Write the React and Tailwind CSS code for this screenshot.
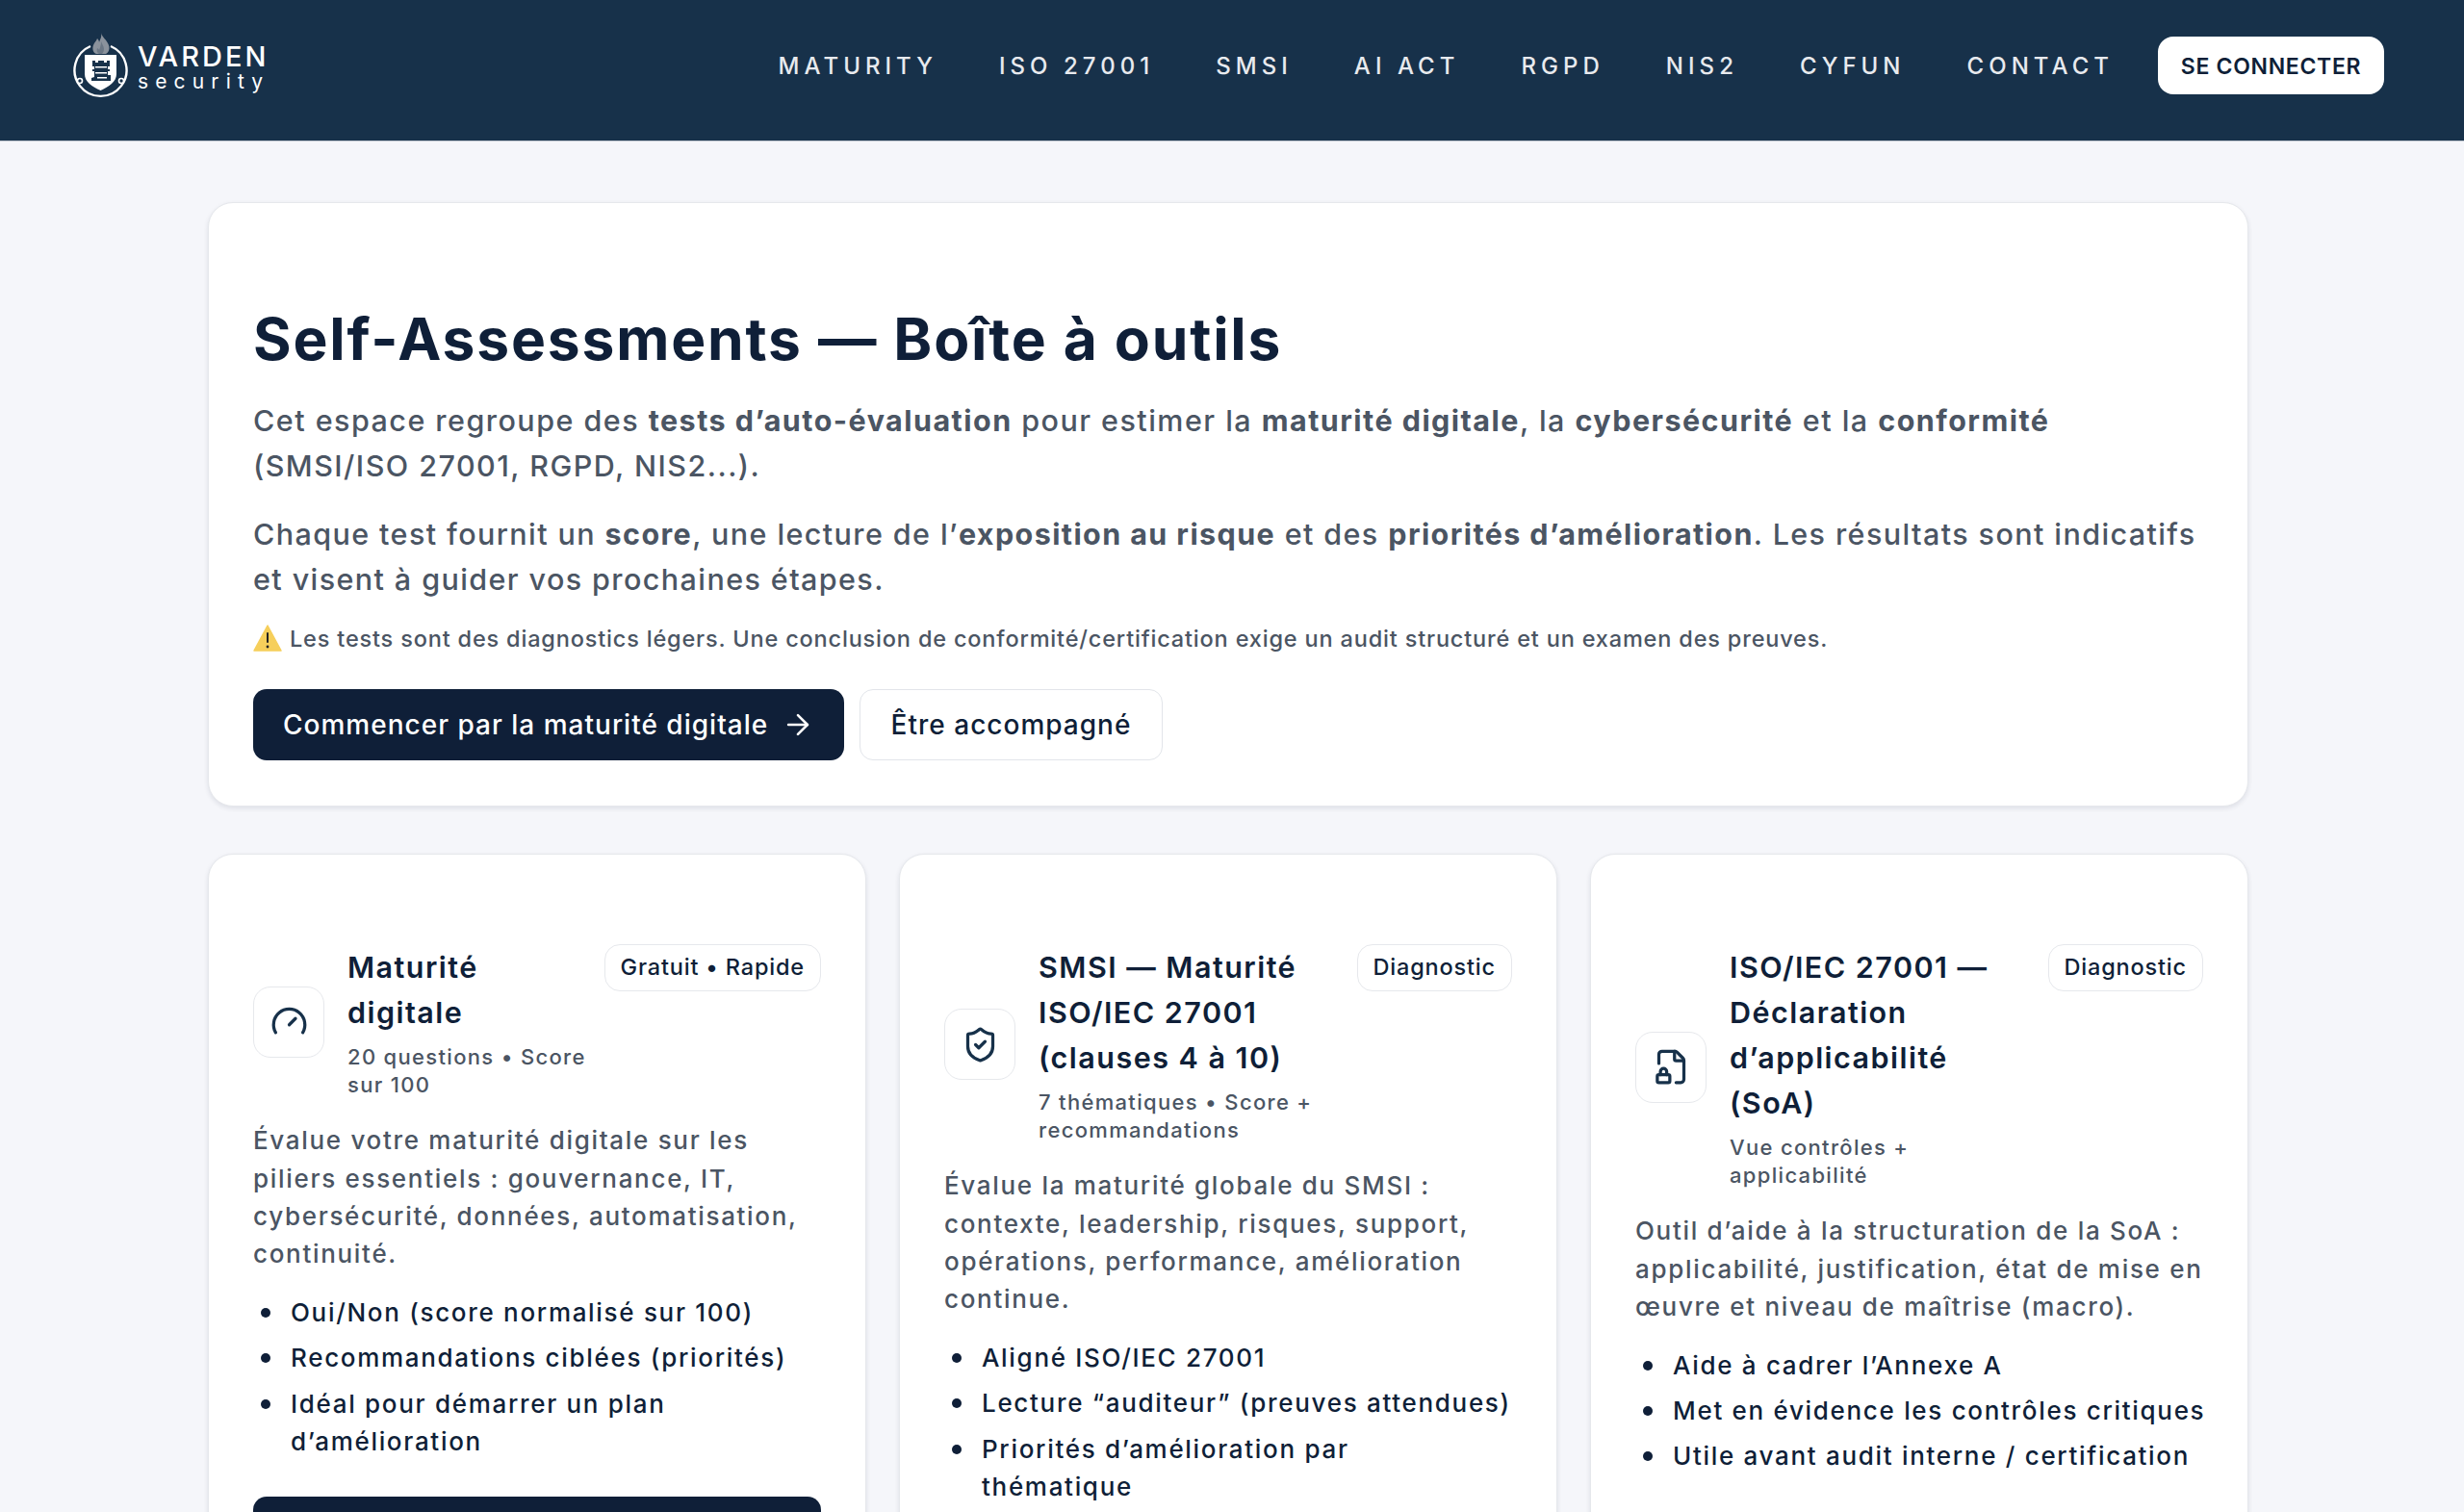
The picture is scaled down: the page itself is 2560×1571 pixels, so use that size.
import { ArrowRight, Gauge, ShieldCheck, FileLock } from 'lucide-react'

const NAV = ['Maturity', 'ISO 27001', 'SMSI', 'AI Act', 'RGPD', 'NIS2', 'CyFun', 'Contact']

const CARDS = [
  {
    icon: Gauge,
    title: 'Maturité\ndigitale',
    badge: 'Gratuit • Rapide',
    meta: '20 questions • Score\nsur 100',
    desc: 'Évalue votre maturité digitale sur les\npiliers essentiels : gouvernance, IT,\ncybersécurité, données, automatisation,\ncontinuité.',
    items: ['Oui/Non (score normalisé sur 100)', 'Recommandations ciblées (priorités)', 'Idéal pour démarrer un plan\nd’amélioration']
  },
  {
    icon: ShieldCheck,
    title: 'SMSI — Maturité\nISO/IEC 27001\n(clauses 4 à 10)',
    badge: 'Diagnostic',
    meta: '7 thématiques • Score +\nrecommandations',
    desc: 'Évalue la maturité globale du SMSI :\ncontexte, leadership, risques, support,\nopérations, performance, amélioration\ncontinue.',
    items: ['Aligné ISO/IEC 27001', 'Lecture “auditeur” (preuves attendues)', 'Priorités d’amélioration par\nthématique']
  },
  {
    icon: FileLock,
    title: 'ISO/IEC 27001 —\nDéclaration\nd’applicabilité\n(SoA)',
    badge: 'Diagnostic',
    meta: 'Vue contrôles +\napplicabilité',
    desc: 'Outil d’aide à la structuration de la SoA :\napplicabilité, justification, état de mise en\nœuvre et niveau de maîtrise (macro).',
    items: ['Aide à cadrer l’Annexe A', 'Met en évidence les contrôles critiques', 'Utile avant audit interne / certification']
  }
]

const Logo = () => (
  <svg width="60" height="68" viewBox="0 0 60 68" fill="none">
    <path d="M19 14a27 27 0 1 0 21 0" stroke="#fff" strokeWidth="2.4" />
    <path d="M30 0c1 5 6 7 8 13 1.500 4-.5 8-3 9H25c-3-1-4.500-5-3-9 1-3 3-4 4-7 1 1 2 2 2 4 1-3 3-6 2-10z" fill="#8a929c" />
    <path d="M30 9c1 3 3 5 3 8 0 2-1 4-2 5h-3c-2-1-3-4-2-6 1 1 2 1 2 2 1-3 2-5 2-9z" fill="#6b7785" />
    <path d="M13 23h33v20c0 8-8 13-16.500 17-9-4-16.500-9-16.500-17z" fill="#fff" />
    <path d="M21 29h3v2h3v-2h6v2h3v-2h3v6h-2v3h2v2h-2v4h3v6H20v-3l3-1v-6h-2v-2h2v-3h-2z" fill="#17314a" />
    <path d="M24 35h12v1.500H24zM24 41h12v1.500H24zM26 46h10v1.500H26z" fill="#fff" />
    <circle cx="8" cy="50" r="2.500" fill="#17314a" stroke="#fff" strokeWidth="1.600" />
    <circle cx="51" cy="50" r="2.500" fill="#17314a" stroke="#fff" strokeWidth="1.600" />
  </svg>
)

const WarningIcon = () => (
  <svg width="30" height="30" viewBox="0 0 30 30" className="shrink-0">
    <path d="M15 2 29 28H1z" fill="#f6cf5b" stroke="#f6cf5b" strokeWidth="1.500" strokeLinejoin="round" />
    <rect x="14" y="9" width="2" height="11" rx="1" fill="#222" />
    <circle cx="15" cy="24" r="1.400" fill="#222" />
  </svg>
)

const Header = () => (
  <header className="h-[147px] bg-[#17314a] border-b border-[#c3c9d1] flex items-center justify-between pl-[75px] pr-[83px] pb-[10px]">
    <div className="flex items-center gap-[8px]">
      <Logo />
      <div className="text-white leading-none pt-[2px]">
        <div className="text-[29px] font-medium tracking-[0.105em]">VARDEN</div>
        <div className="text-[21px] tracking-[0.34em] mt-[1px]">security</div>
      </div>
    </div>
    <div className="flex items-center">
      <nav className="flex items-center gap-[64px] mr-[46px] mt-[2px]">
        {NAV.map((item) => (
          <a key={item} className="text-[24px] font-medium uppercase tracking-[0.21em] text-[#e8eaee]">{item}</a>
        ))}
      </nav>
      <button className="h-[60px] w-[235px] pt-[2px] rounded-[16px] bg-white text-[23px] font-semibold uppercase tracking-[0.03em] text-[#0f1f38]">
        Se connecter
      </button>
    </div>
  </header>
)

const Hero = () => (
  <section className="bg-white rounded-[26px] border border-[#e6e8ec] shadow-[0_2px_5px_rgba(15,31,56,0.1)] pt-[105px] pb-[47px] px-[46px]">
    <h1 className="text-[60.500px] leading-[1.2] font-bold text-[#0f1f38] tracking-[0.03em] whitespace-nowrap">
      Self-Assessments — Boîte à outils
    </h1>
    <p className="mt-[24px] text-[30.500px] leading-[47px] font-medium text-[#4b5563] tracking-[0.048em]">
      Cet espace regroupe des <strong className="font-bold">tests d’auto-évaluation</strong> pour estimer la <strong className="font-bold">maturité digitale</strong>, la <strong className="font-bold">cybersécurité</strong> et la <strong className="font-bold">conformité</strong> (SMSI/ISO 27001, RGPD, NIS2...).
    </p>
    <p className="mt-[24px] text-[30.500px] leading-[47px] font-medium text-[#4b5563] tracking-[0.046em]">
      Chaque test fournit un <strong className="font-bold">score</strong>, une lecture de l’<strong className="font-bold">exposition au risque</strong> et des <strong className="font-bold">priorités d’amélioration</strong>. Les résultats sont indicatifs et visent à guider vos prochaines étapes.
    </p>
    <p className="mt-[19px] flex items-center gap-[8px] text-[23.500px] leading-[39px] font-medium text-[#4b5563] tracking-[0.035em] whitespace-nowrap">
      <WarningIcon />
      Les tests sont des diagnostics légers. Une conclusion de conformité/certification exige un audit structuré et un examen des preuves.
    </p>
    <div className="mt-[33px] flex gap-[16px]">
      <button className="h-[74px] w-[614px] pl-[31px] rounded-[14px] bg-[#0f1f38] text-white text-[28px] font-medium tracking-[0.036em] flex items-center gap-[14px]">
        Commencer par la maturité digitale
        <ArrowRight size={34} strokeWidth={1.8} />
      </button>
      <button className="h-[74px] w-[315px] rounded-[14px] bg-white border border-[#e2e5ea] text-[#0f1f38] text-[28px] font-medium tracking-[0.036em]">
        Être accompagné
      </button>
    </div>
  </section>
)

const ToolCard = ({ card }) => {
  const Icon = card.icon
  return (
    <article className="min-w-0 bg-white rounded-[26px] border border-[#e6e8ec] shadow-[0_2px_5px_rgba(15,31,56,0.1)] pt-[93px] pb-[47px] px-[46px]">
      <div className="flex items-start justify-between gap-[16px]">
        <div className="flex items-center gap-[24px]">
          <div className="w-[74px] h-[74px] shrink-0 rounded-[18px] border border-[#e6e8ec] flex items-center justify-center text-[#17314a]">
            <Icon size={39} strokeWidth={2} />
          </div>
          <div>
            <h3 className="text-[30.500px] leading-[47px] font-semibold text-[#0f1f38] tracking-[0.048em] whitespace-pre">{card.title}</h3>
            <p className="mt-[9px] text-[22px] leading-[29.400px] font-medium text-[#4b5563] tracking-[0.06em] whitespace-pre">{card.meta}</p>
          </div>
        </div>
        <span className="shrink-0 h-[49px] px-[16px] rounded-[16px] border border-[#e6e8ec] flex items-center text-[23.500px] font-medium text-[#0f1f38] tracking-[0.035em]">
          {card.badge}
        </span>
      </div>
      <p className="mt-[23px] text-[26px] leading-[39.200px] font-medium text-[#4b5563] tracking-[0.065em] whitespace-pre">{card.desc}</p>
      <ul className="mt-[22px] text-[26px] leading-[39.200px] font-medium text-[#0f1f38] tracking-[0.065em]">
        {card.items.map((item) => (
          <li key={item} className="mb-[8px] flex items-start gap-[21px]">
            <span className="ml-[8px] mt-[15px] size-[10px] shrink-0 rounded-full bg-[#0f1f38]" />
            <span className="whitespace-pre">{item}</span>
          </li>
        ))}
      </ul>
      <div className="mt-[38px] h-[73px] rounded-[14px] bg-[#0f1f38]" />
    </article>
  )
}

export default function App() {
  return (
    <div className="h-screen overflow-hidden bg-[#f5f6fa] font-['Inter',sans-serif]">
      <Header />
      <main className="w-[2120px] ml-[216px] pt-[63px] flex flex-col gap-[49px]">
        <Hero />
        <div className="grid grid-cols-3 gap-[34px] items-start">
          {CARDS.map((card) => (
            <ToolCard key={card.badge + card.title} card={card} />
          ))}
        </div>
      </main>
    </div>
  )
}
